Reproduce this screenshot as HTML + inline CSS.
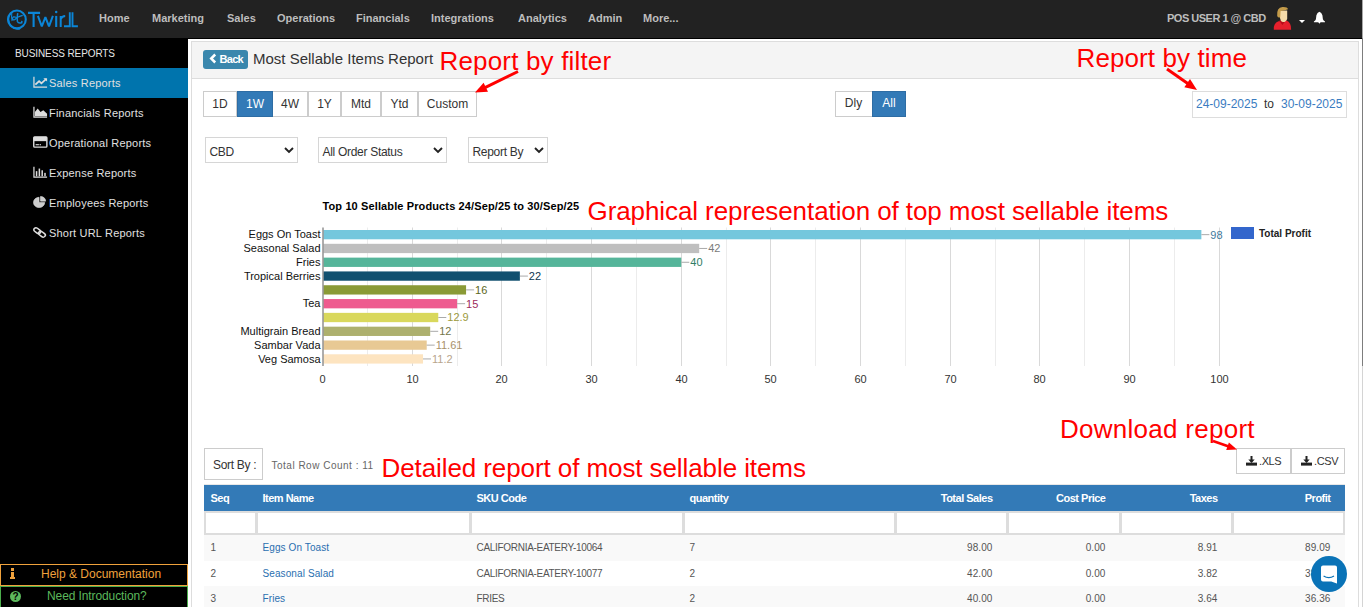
<!DOCTYPE html>
<html><head><meta charset="utf-8"><title>Most Sellable Items Report</title>
<style>
html,body{margin:0;padding:0;width:1363px;height:607px;overflow:hidden;background:#fff;font-family:"Liberation Sans", sans-serif;}
.t{position:absolute;white-space:nowrap;font-family:"Liberation Sans", sans-serif;}
</style></head><body>
<div style="position:absolute;left:0px;top:0px;width:1362px;height:38px;background:#222;"></div>
<div style="position:absolute;left:0px;top:38px;width:1362px;height:1px;background:#000;"></div>
<div style="position:absolute;left:1362px;top:0px;width:1px;height:38px;background:#a8a8a8;"></div>
<div style="position:absolute;left:1362px;top:38px;width:1px;height:328px;background:#7d7d7d;"></div>
<div style="position:absolute;left:1362px;top:366px;width:1px;height:241px;background:#d4d4d4;"></div>
<svg style="position:absolute;left:0;top:0" width="90" height="38">
<g fill="none" stroke="#0b86d8" stroke-linecap="butt">
<circle cx="16.9" cy="19.45" r="8.9" stroke-width="2.1"/>
<path d="M9.2 15.5 A9.6 9.6 0 0 0 20 28.6" stroke-width="1.6"/>
<path d="M11.8 13.2 Q11.2 17.5 12.1 21" stroke-width="1.1"/>
<path d="M15.8 17.3 Q13.2 16.2 12.5 18.2 Q12.4 20.3 14.6 19.6 Q16 19 16.9 17.5 Q19.6 16.4 22.7 15.3" stroke-width="1.3"/>
<path d="M17.7 13.2 Q16.8 18.5 17.4 21.4 Q18.2 23.7 21.7 22.8 L21.9 20.9" stroke-width="1.5"/>
<path d="M28 12.85 h12.1 M33.6 12.9 v14.1" stroke-width="2.1"/>
<path d="M37.9 15.9 L41.8 26.3 L45.4 17.2 L49 26.3 L52.9 15.9" stroke-width="2" stroke-linejoin="bevel"/>
<path d="M56.2 15.9 v11.1" stroke-width="2.1"/>
<path d="M60.7 15.9 v11.1 M60.7 19.2 Q62 16.2 65.2 16.1" stroke-width="2"/>
<path d="M69.8 12.2 v14 h-5.8 M72.5 12.2 v14 h5.4" stroke-width="1.9"/>
</g>
<circle cx="56.2" cy="12" r="1.25" fill="#0b86d8"/>
</svg>
<div class="t" style="left:99px;top:13px;font-size:11px;line-height:11px;color:#bdbdbd;font-weight:bold;">Home</div>
<div class="t" style="left:152px;top:13px;font-size:11px;line-height:11px;color:#bdbdbd;font-weight:bold;">Marketing</div>
<div class="t" style="left:227px;top:13px;font-size:11px;line-height:11px;color:#bdbdbd;font-weight:bold;">Sales</div>
<div class="t" style="left:277px;top:13px;font-size:11px;line-height:11px;color:#bdbdbd;font-weight:bold;">Operations</div>
<div class="t" style="left:356px;top:13px;font-size:11px;line-height:11px;color:#bdbdbd;font-weight:bold;">Financials</div>
<div class="t" style="left:431px;top:13px;font-size:11px;line-height:11px;color:#bdbdbd;font-weight:bold;">Integrations</div>
<div class="t" style="left:518px;top:13px;font-size:11px;line-height:11px;color:#bdbdbd;font-weight:bold;">Analytics</div>
<div class="t" style="left:588px;top:13px;font-size:11px;line-height:11px;color:#bdbdbd;font-weight:bold;">Admin</div>
<div class="t" style="left:643px;top:13px;font-size:11px;line-height:11px;color:#bdbdbd;font-weight:bold;">More...</div>
<div class="t" style="left:1167px;top:13px;font-size:11px;line-height:11px;color:#bdbdbd;font-weight:bold;letter-spacing:-0.5px;">POS USER 1 @ CBD</div>
<svg style="position:absolute;left:1268px;top:4px" width="30" height="30" viewBox="0 0 30 30">
<path d="M5.8 25.7 Q5.2 19.2 10.5 17.2 L18.5 16.6 Q23.3 18.3 23.1 25.7 Z" fill="#e6202c"/>
<path d="M11.2 16.4 L14.4 21 L17.8 16.4 L16.2 16.2 L14.4 18.6 L12.8 16.2z" fill="#b50d18"/>
<path d="M12 6.5 L19.2 6.5 L19.2 15 Q18 18.3 14.8 18.1 Q12.2 17.2 12 14z" fill="#f4dbaa"/>
<path d="M9.2 12 Q8.4 3.8 14.5 3.1 Q19.6 2.9 20 5.2 Q17.5 6.6 12.6 6.9 L12.2 13.4 Q10 14 9.2 12z" fill="#c49c4a"/>
</svg>
<div style="position:absolute;left:1299px;top:19.5px;width:0;height:0;border-left:3px solid transparent;border-right:3px solid transparent;border-top:3.5px solid #fff;"></div>
<svg style="position:absolute;left:1312px;top:11px" width="14" height="14" viewBox="0 0 14 14">
<path d="M7.4 0.7 Q9.6 1.6 10.4 4.2 L10.9 8.3 Q11.4 9.9 13 10.4 L13 11.2 L1.9 11.2 L1.9 10.4 Q3.5 9.9 3.9 8.3 L4.4 4.2 Q5.2 1.6 7.4 0.7z" fill="#fff"/>
<path d="M6.2 11 h2.4 l-1.2 1.8z" fill="#fff"/>
</svg>
<div style="position:absolute;left:0px;top:39px;width:188px;height:568px;background:#000;"></div>
<div class="t" style="left:15px;top:49px;font-size:10px;line-height:10px;color:#e6e6e6;font-weight:normal;letter-spacing:-0.1px;">BUSINESS REPORTS</div>
<div style="position:absolute;left:0px;top:68px;width:188px;height:30px;background:#0074ad;"></div>
<div class="t" style="left:49px;top:78px;font-size:11px;line-height:11px;color:#e0e0e0;font-weight:normal;letter-spacing:0.2px;">Sales Reports</div>
<div class="t" style="left:49px;top:108px;font-size:11px;line-height:11px;color:#e0e0e0;font-weight:normal;letter-spacing:0.2px;">Financials Reports</div>
<div class="t" style="left:49px;top:138px;font-size:11px;line-height:11px;color:#e0e0e0;font-weight:normal;letter-spacing:0.2px;">Operational Reports</div>
<div class="t" style="left:49px;top:168px;font-size:11px;line-height:11px;color:#e0e0e0;font-weight:normal;letter-spacing:0.2px;">Expense Reports</div>
<div class="t" style="left:49px;top:198px;font-size:11px;line-height:11px;color:#e0e0e0;font-weight:normal;letter-spacing:0.2px;">Employees Reports</div>
<div class="t" style="left:49px;top:228px;font-size:11px;line-height:11px;color:#e0e0e0;font-weight:normal;letter-spacing:0.2px;">Short URL Reports</div>
<svg style="position:absolute;left:33px;top:76px" width="15" height="12" viewBox="0 0 16 14" preserveAspectRatio="none"><path d="M1 1 v12 h14" stroke="#ddd" stroke-width="1.3" fill="none"/><path d="M2.5 10 l4 -4 l2.5 2.5 l5 -5" stroke="#ddd" stroke-width="2" fill="none"/><path d="M11 2.5 h4 v4z" fill="#ddd"/></svg>
<svg style="position:absolute;left:33px;top:106px" width="15" height="12" viewBox="0 0 16 14" preserveAspectRatio="none"><path d="M1 1 v12 h14" stroke="#ddd" stroke-width="1.3" fill="none"/><path d="M2 12 v-5 l3 -4 l3 4 l3 -2 l4 4 v3z" fill="#ddd"/></svg>
<svg style="position:absolute;left:33px;top:136px" width="15" height="12" viewBox="0 0 16 14" preserveAspectRatio="none"><rect x="0.8" y="1" width="14" height="12" rx="1" fill="none" stroke="#ddd" stroke-width="1.5"/><rect x="0.8" y="1" width="14" height="5" fill="#ddd"/><rect x="2.8" y="9.5" width="3.5" height="1.3" fill="#ddd"/><rect x="7" y="9.5" width="1.5" height="1.3" fill="#ddd"/></svg>
<svg style="position:absolute;left:33px;top:166px" width="15" height="12" viewBox="0 0 16 14" preserveAspectRatio="none"><path d="M1 1 v12 h14" stroke="#ddd" stroke-width="1.3" fill="none"/><rect x="3" y="6" width="1.6" height="6" fill="#ddd"/><rect x="6" y="3" width="1.6" height="9" fill="#ddd"/><rect x="9" y="5" width="1.6" height="7" fill="#ddd"/><rect x="12" y="8" width="1.6" height="4" fill="#ddd"/></svg>
<svg style="position:absolute;left:33px;top:196px" width="15" height="12" viewBox="0 0 16 14" preserveAspectRatio="none"><path d="M6.5 7.5 v-6 a6 6 0 1 0 6 6z" fill="#ccc" stroke="#eee" stroke-width="0.6"/><path d="M8 6 v-5.5 a5.5 5.5 0 0 1 5.5 5.5z" fill="#ccc" stroke="#eee" stroke-width="0.6"/></svg>
<svg style="position:absolute;left:33px;top:226px" width="15" height="12" viewBox="0 0 16 14" preserveAspectRatio="none"><rect x="0.5" y="3.2" width="8" height="4.6" rx="2.3" transform="rotate(40 4.5 5.5)" fill="none" stroke="#ddd" stroke-width="1.7"/><rect x="5.5" y="7.2" width="8" height="4.6" rx="2.3" transform="rotate(40 9.5 9.5)" fill="none" stroke="#ddd" stroke-width="1.7"/></svg>
<div style="position:absolute;left:0px;top:564px;width:188px;height:22px;border:1px solid #f0a23c;box-sizing:border-box;"></div>
<div class="t" style="left:41px;top:568px;font-size:12px;line-height:12px;color:#f0a23c;font-weight:normal;">Help &amp; Documentation</div>
<div style="position:absolute;left:10px;top:568px;width:5px;height:11px;"><div style="position:absolute;left:1px;top:0;width:3px;height:2.5px;background:#f0a23c"></div><div style="position:absolute;left:1px;top:3.5px;width:3px;height:7px;background:#f0a23c"></div><div style="position:absolute;left:0;top:9px;width:5px;height:2px;background:#f0a23c"></div></div>
<div style="position:absolute;left:0px;top:586px;width:188px;height:21px;border:1px solid #4cae4c;border-bottom:none;box-sizing:border-box;"></div>
<div class="t" style="left:47px;top:590px;font-size:12px;line-height:12px;color:#5cb85c;font-weight:normal;letter-spacing:-0.1px;">Need Introduction?</div>
<div style="position:absolute;left:10px;top:591px;width:11px;height:11px;border-radius:50%;background:#5cb85c;color:#000;font:bold 10px/11px 'Liberation Sans';text-align:center;">?</div>
<div style="position:absolute;left:191px;top:41px;width:1168px;height:659px;border:1px solid #ddd;box-sizing:border-box;background:#fff;"></div>
<div style="position:absolute;left:192px;top:42px;width:1166px;height:37px;background:#f4f4f4;border-bottom:1px solid #ddd;box-sizing:border-box;"></div>
<div style="position:absolute;left:203px;top:50px;width:45px;height:19px;background:#3a87ad;border-radius:3px;"></div>
<svg style="position:absolute;left:209px;top:53px" width="8" height="11" viewBox="0 0 8 11"><path d="M6.2 1.5 l-4 4 l4 4" stroke="#fff" stroke-width="2.5" fill="none"/></svg>
<div class="t" style="left:219.5px;top:53.5px;font-size:11px;line-height:11px;color:#fff;font-weight:bold;letter-spacing:-0.7px;">Back</div>
<div class="t" style="left:253px;top:51px;font-size:15px;line-height:15px;color:#333;font-weight:normal;">Most Sellable Items Report</div>
<div style="position:absolute;left:203px;top:91px;width:34px;height:26px;border:1px solid #ccc;box-sizing:border-box;background:#fff;"></div>
<div class="t" style="left:203px;top:98px;width:34px;text-align:center;font-size:12px;line-height:12px;color:#333">1D</div>
<div style="position:absolute;left:272px;top:91px;width:36px;height:26px;border:1px solid #ccc;box-sizing:border-box;background:#fff;"></div>
<div class="t" style="left:272px;top:98px;width:36px;text-align:center;font-size:12px;line-height:12px;color:#333">4W</div>
<div style="position:absolute;left:308px;top:91px;width:33px;height:26px;border:1px solid #ccc;box-sizing:border-box;background:#fff;"></div>
<div class="t" style="left:308px;top:98px;width:33px;text-align:center;font-size:12px;line-height:12px;color:#333">1Y</div>
<div style="position:absolute;left:341px;top:91px;width:40px;height:26px;border:1px solid #ccc;box-sizing:border-box;background:#fff;"></div>
<div class="t" style="left:341px;top:98px;width:40px;text-align:center;font-size:12px;line-height:12px;color:#333">Mtd</div>
<div style="position:absolute;left:381px;top:91px;width:37px;height:26px;border:1px solid #ccc;box-sizing:border-box;background:#fff;"></div>
<div class="t" style="left:381px;top:98px;width:37px;text-align:center;font-size:12px;line-height:12px;color:#333">Ytd</div>
<div style="position:absolute;left:418px;top:91px;width:59px;height:26px;border:1px solid #ccc;box-sizing:border-box;background:#fff;"></div>
<div class="t" style="left:418px;top:98px;width:59px;text-align:center;font-size:12px;line-height:12px;color:#333">Custom</div>
<div style="position:absolute;left:237px;top:91px;width:36px;height:26px;border:1px solid #2e6da4;box-sizing:border-box;background:#337ab7;"></div>
<div class="t" style="left:237px;top:98px;width:36px;text-align:center;font-size:12px;line-height:12px;color:#fff">1W</div>
<div style="position:absolute;left:835px;top:91px;width:38px;height:26px;border:1px solid #ccc;box-sizing:border-box;background:#fff;"></div>
<div class="t" style="left:835px;top:97px;width:37px;text-align:center;font-size:12px;line-height:12px;color:#333">Dly</div>
<div style="position:absolute;left:872px;top:91px;width:34px;height:26px;border:1px solid #2e6da4;box-sizing:border-box;background:#337ab7;"></div>
<div class="t" style="left:872px;top:97px;width:34px;text-align:center;font-size:12px;line-height:12px;color:#fff">All</div>
<div style="position:absolute;left:1192px;top:91px;width:155px;height:27px;border:1px solid #ddd;box-sizing:border-box;"></div>
<div class="t" style="left:1196px;top:98px;font-size:12px;line-height:12px;color:#3a7cc1;font-weight:normal;">24-09-2025</div>
<div class="t" style="left:1264px;top:98px;font-size:12px;line-height:12px;color:#333;font-weight:normal;">to</div>
<div class="t" style="left:1281px;top:98px;font-size:12px;line-height:12px;color:#3a7cc1;font-weight:normal;">30-09-2025</div>
<div style="position:absolute;left:205px;top:137px;width:93px;height:26px;border:1px solid #d6d6d6;box-sizing:border-box;background:#fff;"></div>
<div class="t" style="left:209.5px;top:146px;font-size:12px;line-height:12px;color:#333;font-weight:normal;letter-spacing:-0.3px;">CBD</div>
<svg style="position:absolute;left:284px;top:146px" width="10" height="8" viewBox="0 0 10 8"><path d="M1 2 l4 4 l4 -4" stroke="#222" stroke-width="1.9" fill="none"/></svg>
<div style="position:absolute;left:318px;top:137px;width:129px;height:26px;border:1px solid #d6d6d6;box-sizing:border-box;background:#fff;"></div>
<div class="t" style="left:322.5px;top:146px;font-size:12px;line-height:12px;color:#333;font-weight:normal;letter-spacing:-0.3px;">All Order Status</div>
<svg style="position:absolute;left:433px;top:146px" width="10" height="8" viewBox="0 0 10 8"><path d="M1 2 l4 4 l4 -4" stroke="#222" stroke-width="1.9" fill="none"/></svg>
<div style="position:absolute;left:468px;top:137px;width:80px;height:26px;border:1px solid #d6d6d6;box-sizing:border-box;background:#fff;"></div>
<div class="t" style="left:472.5px;top:146px;font-size:12px;line-height:12px;color:#333;font-weight:normal;letter-spacing:-0.3px;">Report By</div>
<svg style="position:absolute;left:534px;top:146px" width="10" height="8" viewBox="0 0 10 8"><path d="M1 2 l4 4 l4 -4" stroke="#222" stroke-width="1.9" fill="none"/></svg>
<svg style="position:absolute;left:0;top:0" width="1363" height="607"><line x1="367.5" y1="227.5" x2="367.5" y2="366" stroke="#ececec" stroke-width="1"/><line x1="412.5" y1="227.5" x2="412.5" y2="366" stroke="#d9d9d9" stroke-width="1"/><line x1="457.5" y1="227.5" x2="457.5" y2="366" stroke="#ececec" stroke-width="1"/><line x1="501.5" y1="227.5" x2="501.5" y2="366" stroke="#d9d9d9" stroke-width="1"/><line x1="546.5" y1="227.5" x2="546.5" y2="366" stroke="#ececec" stroke-width="1"/><line x1="591.5" y1="227.5" x2="591.5" y2="366" stroke="#d9d9d9" stroke-width="1"/><line x1="636.5" y1="227.5" x2="636.5" y2="366" stroke="#ececec" stroke-width="1"/><line x1="681.5" y1="227.5" x2="681.5" y2="366" stroke="#d9d9d9" stroke-width="1"/><line x1="726.5" y1="227.5" x2="726.5" y2="366" stroke="#ececec" stroke-width="1"/><line x1="770.5" y1="227.5" x2="770.5" y2="366" stroke="#d9d9d9" stroke-width="1"/><line x1="815.5" y1="227.5" x2="815.5" y2="366" stroke="#ececec" stroke-width="1"/><line x1="860.5" y1="227.5" x2="860.5" y2="366" stroke="#d9d9d9" stroke-width="1"/><line x1="905.5" y1="227.5" x2="905.5" y2="366" stroke="#ececec" stroke-width="1"/><line x1="950.5" y1="227.5" x2="950.5" y2="366" stroke="#d9d9d9" stroke-width="1"/><line x1="995.5" y1="227.5" x2="995.5" y2="366" stroke="#ececec" stroke-width="1"/><line x1="1039.5" y1="227.5" x2="1039.5" y2="366" stroke="#d9d9d9" stroke-width="1"/><line x1="1084.5" y1="227.5" x2="1084.5" y2="366" stroke="#ececec" stroke-width="1"/><line x1="1129.5" y1="227.5" x2="1129.5" y2="366" stroke="#d9d9d9" stroke-width="1"/><line x1="1174.5" y1="227.5" x2="1174.5" y2="366" stroke="#ececec" stroke-width="1"/><line x1="1219.5" y1="227.5" x2="1219.5" y2="366" stroke="#d9d9d9" stroke-width="1"/><rect x="323" y="230.00" width="878.37" height="9.3" fill="#74c7dd"/><line x1="1201.4" y1="234.65" x2="1209.4" y2="234.65" stroke="#aaa" stroke-width="1"/><rect x="323" y="243.81" width="376.21" height="9.3" fill="#bfbfbf"/><line x1="699.2" y1="248.46" x2="707.2" y2="248.46" stroke="#aaa" stroke-width="1"/><rect x="323" y="257.62" width="358.28" height="9.3" fill="#55b59a"/><line x1="681.3" y1="262.27" x2="689.3" y2="262.27" stroke="#aaa" stroke-width="1"/><rect x="323" y="271.43" width="196.87" height="9.3" fill="#11506f"/><line x1="519.9" y1="276.08" x2="527.9" y2="276.08" stroke="#aaa" stroke-width="1"/><rect x="323" y="285.24" width="143.07" height="9.3" fill="#8a9a36"/><line x1="466.1" y1="289.89" x2="474.1" y2="289.89" stroke="#aaa" stroke-width="1"/><rect x="323" y="299.05" width="134.11" height="9.3" fill="#ee5b8f"/><line x1="457.1" y1="303.70" x2="465.1" y2="303.70" stroke="#aaa" stroke-width="1"/><rect x="323" y="312.86" width="115.27" height="9.3" fill="#d9d85c"/><line x1="438.3" y1="317.51" x2="446.3" y2="317.51" stroke="#aaa" stroke-width="1"/><rect x="323" y="326.67" width="107.20" height="9.3" fill="#adb06e"/><line x1="430.2" y1="331.32" x2="438.2" y2="331.32" stroke="#aaa" stroke-width="1"/><rect x="323" y="340.48" width="103.71" height="9.3" fill="#e8c994"/><line x1="426.7" y1="345.13" x2="434.7" y2="345.13" stroke="#aaa" stroke-width="1"/><rect x="323" y="354.29" width="100.03" height="9.3" fill="#fde4c0"/><line x1="423.0" y1="358.94" x2="431.0" y2="358.94" stroke="#aaa" stroke-width="1"/><line x1="323" y1="227.5" x2="323" y2="366" stroke="#999" stroke-width="1.6"/></svg>
<div class="t" style="right:1042.5px;top:229px;font-size:11px;line-height:11px;color:#111;font-weight:normal;">Eggs On Toast</div>
<div class="t" style="left:1210.366px;top:230px;font-size:11px;line-height:11px;color:#3f7a9c;font-weight:normal;">98</div>
<div class="t" style="right:1042.5px;top:243px;font-size:11px;line-height:11px;color:#111;font-weight:normal;">Seasonal Salad</div>
<div class="t" style="left:708.214px;top:243px;font-size:11px;line-height:11px;color:#7a7a7a;font-weight:normal;">42</div>
<div class="t" style="right:1042.5px;top:257px;font-size:11px;line-height:11px;color:#111;font-weight:normal;">Fries</div>
<div class="t" style="left:690.28px;top:257px;font-size:11px;line-height:11px;color:#2f7d66;font-weight:normal;">40</div>
<div class="t" style="right:1042.5px;top:271px;font-size:11px;line-height:11px;color:#111;font-weight:normal;">Tropical Berries</div>
<div class="t" style="left:528.874px;top:271px;font-size:11px;line-height:11px;color:#0d3550;font-weight:normal;">22</div>
<div class="t" style="left:475.072px;top:285px;font-size:11px;line-height:11px;color:#5b6620;font-weight:normal;">16</div>
<div class="t" style="right:1042.5px;top:298px;font-size:11px;line-height:11px;color:#111;font-weight:normal;">Tea</div>
<div class="t" style="left:466.105px;top:299px;font-size:11px;line-height:11px;color:#9c2a5b;font-weight:normal;">15</div>
<div class="t" style="left:447.27430000000004px;top:312px;font-size:11px;line-height:11px;color:#9c9a3c;font-weight:normal;">12.9</div>
<div class="t" style="right:1042.5px;top:326px;font-size:11px;line-height:11px;color:#111;font-weight:normal;">Multigrain Bread</div>
<div class="t" style="left:439.20400000000006px;top:326px;font-size:11px;line-height:11px;color:#73764a;font-weight:normal;">12</div>
<div class="t" style="right:1042.5px;top:340px;font-size:11px;line-height:11px;color:#111;font-weight:normal;">Sambar Vada</div>
<div class="t" style="left:435.70687000000004px;top:340px;font-size:11px;line-height:11px;color:#a8916a;font-weight:normal;">11.61</div>
<div class="t" style="right:1042.5px;top:354px;font-size:11px;line-height:11px;color:#111;font-weight:normal;">Veg Samosa</div>
<div class="t" style="left:432.03040000000004px;top:354px;font-size:11px;line-height:11px;color:#b8a58c;font-weight:normal;">11.2</div>
<div class="t" style="left:322.5px;width:0;display:flex;justify-content:center;top:374px;font-size:11px;line-height:11px;color:#333;font-weight:normal;">0</div>
<div class="t" style="left:412.5px;width:0;display:flex;justify-content:center;top:374px;font-size:11px;line-height:11px;color:#333;font-weight:normal;">10</div>
<div class="t" style="left:501.5px;width:0;display:flex;justify-content:center;top:374px;font-size:11px;line-height:11px;color:#333;font-weight:normal;">20</div>
<div class="t" style="left:591.5px;width:0;display:flex;justify-content:center;top:374px;font-size:11px;line-height:11px;color:#333;font-weight:normal;">30</div>
<div class="t" style="left:681.5px;width:0;display:flex;justify-content:center;top:374px;font-size:11px;line-height:11px;color:#333;font-weight:normal;">40</div>
<div class="t" style="left:770.5px;width:0;display:flex;justify-content:center;top:374px;font-size:11px;line-height:11px;color:#333;font-weight:normal;">50</div>
<div class="t" style="left:860.5px;width:0;display:flex;justify-content:center;top:374px;font-size:11px;line-height:11px;color:#333;font-weight:normal;">60</div>
<div class="t" style="left:950.5px;width:0;display:flex;justify-content:center;top:374px;font-size:11px;line-height:11px;color:#333;font-weight:normal;">70</div>
<div class="t" style="left:1039.5px;width:0;display:flex;justify-content:center;top:374px;font-size:11px;line-height:11px;color:#333;font-weight:normal;">80</div>
<div class="t" style="left:1129.5px;width:0;display:flex;justify-content:center;top:374px;font-size:11px;line-height:11px;color:#333;font-weight:normal;">90</div>
<div class="t" style="left:1219.5px;width:0;display:flex;justify-content:center;top:374px;font-size:11px;line-height:11px;color:#333;font-weight:normal;">100</div>
<div class="t" style="left:322.5px;top:201px;font-size:11px;line-height:11px;color:#000;font-weight:bold;letter-spacing:0.12px;">Top 10 Sellable Products 24/Sep/25 to 30/Sep/25</div>
<div style="position:absolute;left:1231px;top:227px;width:23px;height:12px;background:#3366cc;"></div>
<div class="t" style="left:1259px;top:229px;font-size:10px;line-height:10px;color:#222;font-weight:bold;">Total Profit</div>
<div style="position:absolute;left:204px;top:448px;width:59px;height:32px;border:1px solid #ccc;box-sizing:border-box;"></div>
<div class="t" style="left:213px;top:459px;font-size:12px;line-height:12px;color:#333;font-weight:normal;letter-spacing:-0.3px;">Sort By :</div>
<div class="t" style="left:271.5px;top:461px;font-size:10px;line-height:10px;color:#666;font-weight:normal;letter-spacing:0.5px;">Total Row Count : 11</div>
<div style="position:absolute;left:1236px;top:448px;width:55px;height:26px;border:1px solid #ccc;box-sizing:border-box;"></div>
<svg style="position:absolute;left:1246px;top:455.5px" width="11" height="10" viewBox="0 0 11 10"><path d="M5.5 0 v5.5" stroke="#222" stroke-width="2" fill="none"/><path d="M2.3 3.6 h6.4 l-3.2 3.3z" fill="#222"/><rect x="0" y="6.6" width="11" height="3" fill="#222"/></svg>
<div class="t" style="left:1259px;top:456px;font-size:11px;line-height:11px;color:#333;font-weight:normal;letter-spacing:-0.4px;">.XLS</div>
<div style="position:absolute;left:1291px;top:448px;width:54px;height:26px;border:1px solid #ccc;box-sizing:border-box;"></div>
<svg style="position:absolute;left:1301px;top:455.5px" width="11" height="10" viewBox="0 0 11 10"><path d="M5.5 0 v5.5" stroke="#222" stroke-width="2" fill="none"/><path d="M2.3 3.6 h6.4 l-3.2 3.3z" fill="#222"/><rect x="0" y="6.6" width="11" height="3" fill="#222"/></svg>
<div class="t" style="left:1314px;top:456px;font-size:11px;line-height:11px;color:#333;font-weight:normal;letter-spacing:-0.4px;">.CSV</div>
<div style="position:absolute;left:204px;top:484px;width:1141px;height:1px;background:#e8e8e8;"></div>
<div style="position:absolute;left:204px;top:485px;width:1141px;height:26px;background:#337ab7;"></div>
<div class="t" style="left:210.5px;top:493px;font-size:11px;line-height:11px;color:#fff;font-weight:bold;letter-spacing:-0.5px;">Seq</div>
<div class="t" style="left:262.5px;top:493px;font-size:11px;line-height:11px;color:#fff;font-weight:bold;letter-spacing:-0.5px;">Item Name</div>
<div class="t" style="left:476.5px;top:493px;font-size:11px;line-height:11px;color:#fff;font-weight:bold;letter-spacing:-0.5px;">SKU Code</div>
<div class="t" style="left:689.5px;top:493px;font-size:11px;line-height:11px;color:#fff;font-weight:bold;letter-spacing:-0.5px;">quantity</div>
<div class="t" style="right:370.5px;top:493px;font-size:11px;line-height:11px;color:#fff;font-weight:bold;letter-spacing:-0.5px;">Total Sales</div>
<div class="t" style="right:257.5px;top:493px;font-size:11px;line-height:11px;color:#fff;font-weight:bold;letter-spacing:-0.5px;">Cost Price</div>
<div class="t" style="right:145.5px;top:493px;font-size:11px;line-height:11px;color:#fff;font-weight:bold;letter-spacing:-0.5px;">Taxes</div>
<div class="t" style="right:32.5px;top:493px;font-size:11px;line-height:11px;color:#fff;font-weight:bold;letter-spacing:-0.5px;">Profit</div>
<div style="position:absolute;left:204px;top:511px;width:1141px;height:24px;background:#ddd;"></div>
<div style="position:absolute;left:206px;top:513px;width:49px;height:19.5px;background:#fff;"></div>
<div style="position:absolute;left:258px;top:513px;width:211px;height:19.5px;background:#fff;"></div>
<div style="position:absolute;left:472px;top:513px;width:210px;height:19.5px;background:#fff;"></div>
<div style="position:absolute;left:685px;top:513px;width:209px;height:19.5px;background:#fff;"></div>
<div style="position:absolute;left:897px;top:513px;width:109px;height:19.5px;background:#fff;"></div>
<div style="position:absolute;left:1009px;top:513px;width:110px;height:19.5px;background:#fff;"></div>
<div style="position:absolute;left:1122px;top:513px;width:109px;height:19.5px;background:#fff;"></div>
<div style="position:absolute;left:1234px;top:513px;width:109px;height:19.5px;background:#fff;"></div>
<div style="position:absolute;left:204px;top:535px;width:1141px;height:26px;background:#f9f9f9;"></div>
<div class="t" style="left:210.5px;top:543px;font-size:10px;line-height:10px;color:#555;font-weight:normal;letter-spacing:0.1px;">1</div>
<div class="t" style="left:262.5px;top:543px;font-size:10px;line-height:10px;color:#2a6fb0;font-weight:normal;letter-spacing:0.1px;">Eggs On Toast</div>
<div class="t" style="left:476.5px;top:543px;font-size:10px;line-height:10px;color:#555;font-weight:normal;letter-spacing:-0.3px;">CALIFORNIA-EATERY-10064</div>
<div class="t" style="left:689.5px;top:543px;font-size:10px;line-height:10px;color:#555;font-weight:normal;letter-spacing:0.1px;">7</div>
<div class="t" style="right:370.5px;top:543px;font-size:10px;line-height:10px;color:#555;font-weight:normal;letter-spacing:0.1px;">98.00</div>
<div class="t" style="right:257.5px;top:543px;font-size:10px;line-height:10px;color:#555;font-weight:normal;letter-spacing:0.1px;">0.00</div>
<div class="t" style="right:145.5px;top:543px;font-size:10px;line-height:10px;color:#555;font-weight:normal;letter-spacing:0.1px;">8.91</div>
<div class="t" style="right:32.5px;top:543px;font-size:10px;line-height:10px;color:#555;font-weight:normal;letter-spacing:0.1px;">89.09</div>
<div style="position:absolute;left:204px;top:561px;width:1141px;height:25px;background:#fff;"></div>
<div class="t" style="left:210.5px;top:569px;font-size:10px;line-height:10px;color:#555;font-weight:normal;letter-spacing:0.1px;">2</div>
<div class="t" style="left:262.5px;top:569px;font-size:10px;line-height:10px;color:#2a6fb0;font-weight:normal;letter-spacing:0.1px;">Seasonal Salad</div>
<div class="t" style="left:476.5px;top:569px;font-size:10px;line-height:10px;color:#555;font-weight:normal;letter-spacing:-0.3px;">CALIFORNIA-EATERY-10077</div>
<div class="t" style="left:689.5px;top:569px;font-size:10px;line-height:10px;color:#555;font-weight:normal;letter-spacing:0.1px;">2</div>
<div class="t" style="right:370.5px;top:569px;font-size:10px;line-height:10px;color:#555;font-weight:normal;letter-spacing:0.1px;">42.00</div>
<div class="t" style="right:257.5px;top:569px;font-size:10px;line-height:10px;color:#555;font-weight:normal;letter-spacing:0.1px;">0.00</div>
<div class="t" style="right:145.5px;top:569px;font-size:10px;line-height:10px;color:#555;font-weight:normal;letter-spacing:0.1px;">3.82</div>
<div class="t" style="right:32.5px;top:569px;font-size:10px;line-height:10px;color:#555;font-weight:normal;letter-spacing:0.1px;">38.18</div>
<div style="position:absolute;left:204px;top:586px;width:1141px;height:26px;background:#f9f9f9;"></div>
<div class="t" style="left:210.5px;top:594px;font-size:10px;line-height:10px;color:#555;font-weight:normal;letter-spacing:0.1px;">3</div>
<div class="t" style="left:262.5px;top:594px;font-size:10px;line-height:10px;color:#2a6fb0;font-weight:normal;letter-spacing:0.1px;">Fries</div>
<div class="t" style="left:476.5px;top:594px;font-size:10px;line-height:10px;color:#555;font-weight:normal;letter-spacing:-0.3px;">FRIES</div>
<div class="t" style="left:689.5px;top:594px;font-size:10px;line-height:10px;color:#555;font-weight:normal;letter-spacing:0.1px;">2</div>
<div class="t" style="right:370.5px;top:594px;font-size:10px;line-height:10px;color:#555;font-weight:normal;letter-spacing:0.1px;">40.00</div>
<div class="t" style="right:257.5px;top:594px;font-size:10px;line-height:10px;color:#555;font-weight:normal;letter-spacing:0.1px;">0.00</div>
<div class="t" style="right:145.5px;top:594px;font-size:10px;line-height:10px;color:#555;font-weight:normal;letter-spacing:0.1px;">3.64</div>
<div class="t" style="right:32.5px;top:594px;font-size:10px;line-height:10px;color:#555;font-weight:normal;letter-spacing:0.1px;">36.36</div>
<div style="position:absolute;left:1311px;top:556px;width:36px;height:36px;border-radius:50%;background:#0a73b7;"></div>
<svg style="position:absolute;left:1305px;top:550px" width="50" height="50" viewBox="0 0 50 50"><path d="M18 15.5 h12 q2 0 2 2 v16 h-0.2 l-5.5 -2 h-8.3 q-2 0 -2 -2 v-12 q0 -2 2 -2z" fill="#fff"/><path d="M18.6 26 Q23.8 29.3 29 26" stroke="#0a73b7" stroke-width="1.3" fill="none"/></svg>
<div class="t" style="left:439.5px;top:48px;font-size:26px;line-height:26px;color:#ff0000;font-weight:normal;letter-spacing:0.17px;transform:scaleY(0.96);transform-origin:0 22px;">Report by filter</div>
<div class="t" style="left:1076.5px;top:45px;font-size:26px;line-height:26px;color:#ff0000;font-weight:normal;letter-spacing:0.1px;transform:scaleY(0.96);transform-origin:0 22px;">Report by time</div>
<div class="t" style="left:587.5px;top:198px;font-size:26px;line-height:26px;color:#ff0000;font-weight:normal;letter-spacing:-0.09px;transform:scaleY(0.96);transform-origin:0 22px;">Graphical representation of top most sellable items</div>
<div class="t" style="left:1060px;top:416px;font-size:26px;line-height:26px;color:#ff0000;font-weight:normal;letter-spacing:0.27px;transform:scaleY(0.96);transform-origin:0 22px;">Download report</div>
<div class="t" style="left:381.5px;top:455px;font-size:26px;line-height:26px;color:#ff0000;font-weight:normal;letter-spacing:-0.09px;transform:scaleY(0.96);transform-origin:0 22px;">Detailed report of most sellable items</div>
<svg style="position:absolute;left:0;top:0" width="1363" height="607"><line x1="518.0" y1="71.5" x2="484.0" y2="88.1" stroke="#ff0000" stroke-width="3"/><path d="M475.0 92.5 L483.6 82.7 L488.0 91.7 z" fill="#ff0000"/><line x1="1167.0" y1="69.0" x2="1188.8" y2="84.3" stroke="#ff0000" stroke-width="3"/><path d="M1197.0 90.0 L1184.3 87.2 L1190.0 79.0 z" fill="#ff0000"/><line x1="1213.0" y1="441.0" x2="1229.5" y2="446.8" stroke="#ff0000" stroke-width="2.5"/><path d="M1237.0 449.5 L1226.2 449.9 L1228.9 442.4 z" fill="#ff0000"/></svg>
</body></html>
